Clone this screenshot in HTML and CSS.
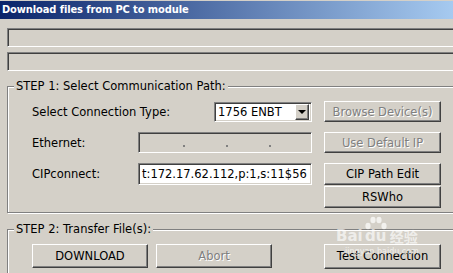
FILE: index.html
```html
<!DOCTYPE html>
<html lang="en">
  <head>
    <title>Download files from PC to module</title>
    <meta charset="UTF-8" />
    <link rel="stylesheet" href="styles.css">
  </head>
  <body>
    <div class="titlebar">Download files from PC to module</div>

    <div class="status-box first"></div>
    <div class="status-box"></div>

    <fieldset class="group step1">
      <legend>STEP 1: Select Communication Path:</legend>
      <div class="group-body">
        <div class="row">
          <label class="label wide">Select Connection Type:</label>
          <div class="select">
            <span class="select-value">1756 ENBT</span>
            <span class="drop-btn"><span class="arrow"></span></span>
          </div>
          <button class="btn side" disabled>Browse Device(s)</button>
        </div>
        <div class="row">
          <label class="label">Ethernet:</label>
          <div class="field ip">
            <span class="dot"></span>
            <span class="dot"></span>
            <span class="dot"></span>
          </div>
          <button class="btn side" disabled>Use Default IP</button>
        </div>
        <div class="row tall tight">
          <label class="label">CIPconnect:</label>
          <div class="field text">t:172.17.62.112,p:1,s:11$56</div>
          <button class="btn side">CIP Path Edit</button>
        </div>
        <div class="row tall last">
          <div class="spacer"></div>
          <button class="btn side">RSWho</button>
        </div>
      </div>
    </fieldset>

    <fieldset class="group step2">
      <legend>STEP 2: Transfer File(s):</legend>
      <div class="group-body">
        <div class="row actions">
          <button class="btn action">DOWNLOAD</button>
          <button class="btn action" disabled>Abort</button>
          <button class="btn side test">Test Connection</button>
        </div>
      </div>
    </fieldset>

    <!-- watermark from the source screenshot -->
    <div class="watermark">
      <div class="mark-logo">
        <span>Bai</span>
        <span class="paw">
          <svg width="24" height="14" viewBox="0 0 24 14">
            <ellipse cx="4" cy="10" rx="2.6" ry="3.2" />
            <ellipse cx="9" cy="4" rx="2.6" ry="3.2" />
            <ellipse cx="15" cy="4" rx="2.6" ry="3.2" />
            <ellipse cx="20" cy="10" rx="2.6" ry="3.2" />
          </svg>
          <span class="du">du</span>
        </span>
        <span class="cn">经验</span>
      </div>
      <div class="mark-url">jingyan.baidu.com</div>
    </div>
  </body>
</html>
```

FILE: styles.css
```css
* {
  box-sizing: border-box;
  margin: 0;
  padding: 0;
}
body {
  width: 453px;
  height: 273px;
  overflow: hidden;
  background: #d4d0c8;
  font-family: "DejaVu Sans", Verdana, sans-serif;
  font-size: 11.5px;
  color: #000;
  position: relative;
}
.titlebar {
  margin-top: 1px;
  height: 18px;
  line-height: 18px;
  padding-left: 2px;
  background: linear-gradient(90deg, #0a246a, #a6caf0);
  color: #fff;
  font-family: "DejaVu Sans Condensed", "DejaVu Sans", sans-serif;
  font-weight: bold;
  font-size: 11px;
  letter-spacing: -0.1px;
  white-space: nowrap;
}
.status-box {
  margin: 5px 0 0 7px;
  width: 470px;
  height: 19px;
  border: 1px solid;
  border-color: #808080 #fff #fff #808080;
  box-shadow: inset 1px 1px #404040;
}
.status-box.first {
  margin-top: 9px;
}
.group {
  margin-left: 7px;
  width: 470px;
  border: 1px solid #808080;
  box-shadow: inset 1px 1px #fff, 1px 1px #fff;
  padding: 0 0 0 6px;
}
.group legend {
  padding: 0 2px;
  background: #d4d0c8;
  line-height: 14px;
}
.step1 {
  margin-top: 8px;
}
.step2 {
  margin-top: 9px;
  height: 60px;
}
.group-body {
  padding: 8px 0 0 18px;
}
.row {
  display: flex;
  align-items: center;
  height: 21px;
  margin-bottom: 10px;
}
.row.tall {
  height: 22px;
}
.row.tight {
  margin-bottom: 1px;
}
.row.last {
  margin-bottom: 4px;
}
.label {
  width: 106px;
  white-space: nowrap;
}
.label.wide {
  width: 182px;
}
.spacer {
  width: 280px;
}
.select {
  width: 98px;
  height: 20px;
  display: flex;
  align-items: center;
  background: #fff;
  border: 1px solid;
  border-color: #808080 #fff #fff #808080;
  box-shadow: inset 1px 1px #404040, inset -1px -1px #d4d0c8;
  padding: 2px;
}
.select-value {
  flex: 1;
  padding-left: 1px;
}
.drop-btn {
  width: 14px;
  height: 16px;
  display: flex;
  align-items: center;
  justify-content: center;
  background: #d4d0c8;
  border: 1px solid;
  border-color: #fff #404040 #404040 #fff;
  box-shadow: inset -1px -1px #808080;
}
.arrow {
  width: 0;
  height: 0;
  border-left: 4px solid transparent;
  border-right: 4px solid transparent;
  border-top: 4px solid #000;
}
.field {
  width: 174px;
  height: 100%;
  border: 1px solid;
  border-color: #808080 #fff #fff #808080;
  box-shadow: inset 1px 1px #404040, inset -1px -1px #d4d0c8;
}
.field.ip {
  position: relative;
}
.dot {
  position: absolute;
  top: 12px;
  width: 2px;
  height: 2px;
  background: #808080;
}
.dot:nth-child(1) { left: 44px; }
.dot:nth-child(2) { left: 87px; }
.dot:nth-child(3) { left: 130px; }
.field.text {
  background: #fff;
  padding: 2px 0 0 3px;
  line-height: 16px;
  white-space: nowrap;
  overflow: hidden;
}
.btn {
  font-family: inherit;
  font-size: inherit;
  color: #000;
  background: #d4d0c8;
  border: 1px solid;
  border-color: #fff #404040 #404040 #fff;
  box-shadow: inset -1px -1px #808080;
  height: 100%;
}
.btn:disabled {
  color: #808080;
  text-shadow: 1px 1px #fff;
}
.btn.side {
  width: 117px;
  margin-left: 12px;
}
.row.actions {
  height: 24px;
}
.btn.action {
  width: 116px;
  margin-right: 8px;
}
.btn.test {
  margin-left: 44px;
  height: 25px;
}
.watermark {
  position: absolute;
  left: 336px;
  top: 216px;
  width: 92px;
  white-space: nowrap;
  color: rgba(255, 255, 255, 0.65);
  text-align: center;
}
.mark-logo {
  display: flex;
  align-items: flex-end;
  font-family: "DejaVu Sans", sans-serif;
  font-weight: bold;
  font-size: 15px;
  line-height: 16px;
}
.paw {
  display: flex;
  flex-direction: column;
  align-items: center;
  margin-left: 1px;
}
.paw svg {
  fill: #ffffff;
  opacity: 0.7;
  margin-bottom: -2px;
}
.mark-logo .cn {
  font-family: "Noto Sans CJK SC", sans-serif;
  font-size: 14px;
  margin-left: 2px;
}
.mark-url {
  font-size: 8px;
  margin-top: 3px;
}
```
